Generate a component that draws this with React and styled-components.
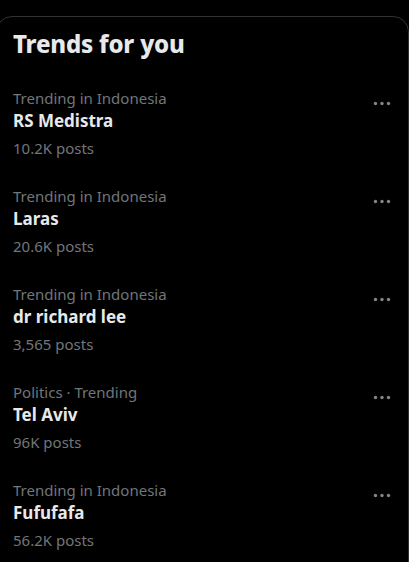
import React from "react";
import styled, { createGlobalStyle } from "styled-components";

const Global = createGlobalStyle`
  html, body { margin: 0; padding: 0; background: #000; }
  body { font-family: "Noto Sans", "Open Sans", sans-serif; overflow: hidden; height: 562px; }
`;

const Card = styled.section`
  margin: 16px 0 0 -4px;
  width: 413px;
  padding-bottom: 24px;
  border: 1px solid #2f3336;
  border-radius: 16px;
  box-sizing: border-box;
  background: #000;
`;

const Header = styled.h2`
  margin: 0;
  padding: 13px 16px 16px;
  font-size: 24px;
  line-height: 28px;
  font-weight: 800;
  color: #e7e9ea;
  letter-spacing: -0.2px;
`;

const Item = styled.div`
  display: flex;
  align-items: flex-start;
  padding: 14px 16px;
`;

const Body = styled.div`
  flex: 1;
  display: flex;
  flex-direction: column;
`;

const Meta = styled.div`
  font-size: 15px;
  line-height: 20px;
  color: #71767b;
`;

const Name = styled.div`
  font-size: 17px;
  line-height: 26px;
  font-weight: 700;
  color: #e7e9ea;
`;

const Posts = styled.div`
  margin-top: 4px;
  font-size: 15px;
  line-height: 20px;
  color: #71767b;
`;

const More = styled.button`
  background: none;
  border: 0;
  padding: 0;
  margin: 5px 0 0 0;
  width: 20px;
  height: 20px;
  display: flex;
  align-items: center;
  justify-content: center;
  color: #80868b;
`;

const Dots = () => (
  <svg width="20" height="20" viewBox="0 0 20 20" fill="currentColor">
    <circle cx="3.5" cy="10.5" r="1.7" />
    <circle cx="10" cy="10.5" r="1.7" />
    <circle cx="16.5" cy="10.5" r="1.7" />
  </svg>
);

const trends = [
  { meta: "Trending in Indonesia", name: "RS Medistra", posts: "10.2K posts" },
  { meta: "Trending in Indonesia", name: "Laras", posts: "20.6K posts" },
  { meta: "Trending in Indonesia", name: "dr richard lee", posts: "3,565 posts" },
  { meta: "Politics · Trending", name: "Tel Aviv", posts: "96K posts" },
  { meta: "Trending in Indonesia", name: "Fufufafa", posts: "56.2K posts" },
];

export default function App() {
  return (
    <>
      <Global />
      <Card>
        <Header>Trends for you</Header>
        {trends.map((t, i) => (
          <Item key={i}>
            <Body>
              <Meta>{t.meta}</Meta>
              <Name>{t.name}</Name>
              <Posts>{t.posts}</Posts>
            </Body>
            <More aria-label="More">
              <Dots />
            </More>
          </Item>
        ))}
      </Card>
    </>
  );
}
